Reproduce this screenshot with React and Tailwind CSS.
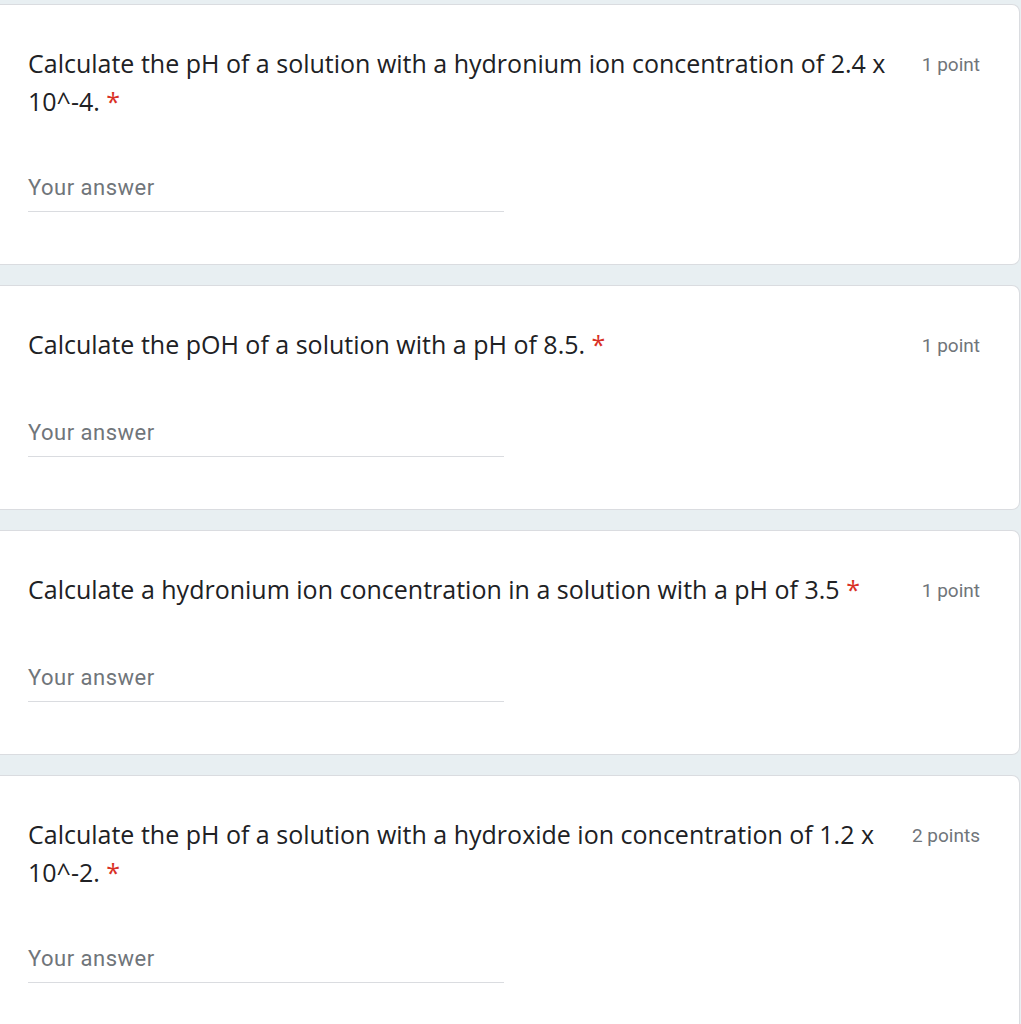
const questions = [
  {
    text: "Calculate the pH of a solution with a hydronium ion concentration of 2.4 x 10^-4.",
    points: "1 point",
  },
  {
    text: "Calculate the pOH of a solution with a pH of 8.5.",
    points: "1 point",
  },
  {
    text: "Calculate a hydronium ion concentration in a solution with a pH of 3.5",
    points: "1 point",
  },
  {
    text: "Calculate the pH of a solution with a hydroxide ion concentration of 1.2 x 10^-2.",
    points: "2 points",
  },
];

function QuestionCard({ text, points }) {
  return (
    <div className="bg-white border-y border-r border-[#dadce0] rounded-r-lg pt-[39px] pl-7 pr-[39px] pb-[52px]">
      <div className="flex items-start gap-6 min-h-[40px]">
        <div className="flex-1 text-[25px] leading-[38px] text-[#202124] font-['Open_Sans',sans-serif]">
          {text} <span className="text-[#d93025]">*</span>
        </div>
        <div className="pt-[2px] text-[19px] leading-[38px] text-[#70757a] whitespace-nowrap font-['Roboto',sans-serif]">
          {points}
        </div>
      </div>
      <div className="mt-14 w-[476px] border-b border-[#dadce0] pb-[11px] text-[22px] leading-6 tracking-[0.5px] text-[#70757a] font-['Roboto',sans-serif]">
        Your answer
      </div>
    </div>
  );
}

export default function App() {
  return (
    <div className="min-h-screen bg-[#e8eff2] pt-1 pr-px flex flex-col gap-5">
      {questions.map((q, i) => (
        <QuestionCard key={i} text={q.text} points={q.points} />
      ))}
    </div>
  );
}
